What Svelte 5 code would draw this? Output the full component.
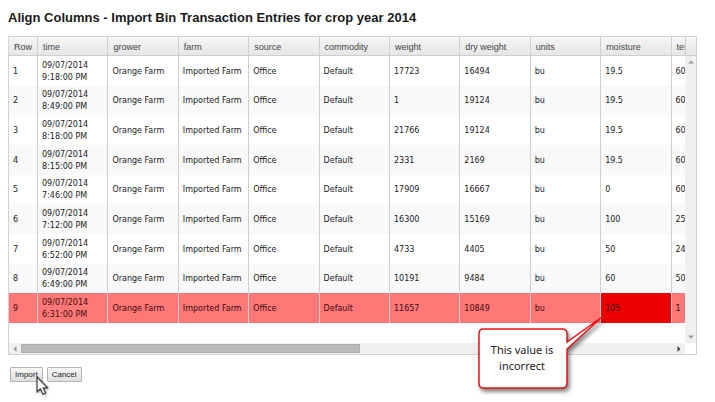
<script>
	const columns = [
		'Row',
		'time',
		'grower',
		'farm',
		'source',
		'commodity',
		'weight',
		'dry weight',
		'units',
		'moisture',
		'test weight'
	];

	const entries = [
		{ time: '9:18:00 PM', weight: 17723, dryWeight: 16494, moisture: 19.5, test: 60 },
		{ time: '8:49:00 PM', weight: 1, dryWeight: 19124, moisture: 19.5, test: 60 },
		{ time: '8:18:00 PM', weight: 21766, dryWeight: 19124, moisture: 19.5, test: 60 },
		{ time: '8:15:00 PM', weight: 2331, dryWeight: 2169, moisture: 19.5, test: 60 },
		{ time: '7:46:00 PM', weight: 17909, dryWeight: 16667, moisture: 0, test: 60 },
		{ time: '7:12:00 PM', weight: 16300, dryWeight: 15169, moisture: 100, test: 25 },
		{ time: '6:52:00 PM', weight: 4733, dryWeight: 4405, moisture: 50, test: 24 },
		{ time: '6:49:00 PM', weight: 10191, dryWeight: 9484, moisture: 60, test: 50 },
		{ time: '6:31:00 PM', weight: 11657, dryWeight: 10849, moisture: 105, test: 1 }
	];

	const isInvalid = (entry) => entry.moisture > 100;
</script>

<main>
	<h1>Align Columns - Import Bin Transaction Entries for crop year 2014</h1>

	<div class="grid">
		<div class="grid-view">
			<div class="viewport">
				<table>
					<thead>
						<tr>
							{#each columns as column}
								<th class:row-number={column === 'Row'}>{column}</th>
							{/each}
						</tr>
					</thead>
					<tbody>
						{#each entries as entry, i}
							<tr class:invalid={isInvalid(entry)}>
								<td>{i + 1}</td>
								<td>09/07/2014<br />{entry.time}</td>
								<td>Orange Farm</td>
								<td>Imported Farm</td>
								<td>Office</td>
								<td>Default</td>
								<td>{entry.weight}</td>
								<td>{entry.dryWeight}</td>
								<td>bu</td>
								<td class:bad-value={isInvalid(entry)}>{entry.moisture}</td>
								<td>{entry.test}</td>
							</tr>
						{/each}
					</tbody>
				</table>
			</div>
			<div class="side">
				<div class="corner"></div>
				<div class="scroll-v">
					<svg width="6" height="4" viewBox="0 0 6 4"><path d="M0 3.5 3 .5 6 3.5z" fill="#999" /></svg>
					<svg width="6" height="4" viewBox="0 0 6 4"><path d="M0 .5h6L3 3.5z" fill="#999" /></svg>
				</div>
			</div>
		</div>
		<div class="scroll-h">
			<svg width="4" height="6" viewBox="0 0 4 6"><path d="M3.5 0v6L.5 3z" fill="#999" /></svg>
			<div class="track"><div class="thumb"></div></div>
			<svg width="4" height="6" viewBox="0 0 4 6"><path d="M.5 0v6l3-3z" fill="#444" /></svg>
		</div>

		<!-- Validation callout -->
		<div class="callout">
			<svg width="134" height="84" viewBox="0 0 134 84">
				<path
					d="M5 17H84Q89 17 89 22V30L124 5 89 37V71Q89 76 84 76H5Q1 76 1 71V22Q1 17 5 17Z"
					fill="#fff"
					stroke="#e81414"
					stroke-width="1.5"
				/>
			</svg>
			<p>This value is<br />incorrect</p>
		</div>
	</div>

	<div class="actions">
		<button type="button">Import</button>
		<button type="button">Cancel</button>
		<svg class="cursor" width="14" height="20" viewBox="0 0 14 20">
			<path
				d="M1 1V16L4.4 12.8 7 18.2 9.6 17 7.1 11.8H11.6Z"
				fill="#fff"
				stroke="#444"
				stroke-width="1.3"
				stroke-linejoin="round"
			/>
		</svg>
	</div>
</main>

<style>
	:global(body) {
		background: #fff;
	}

	main {
		padding: 10px 18px 20px 8px;
		font-family: 'Liberation Sans', Arial, sans-serif;
		color: #222;
	}

	h1 {
		margin: 0 0 10px;
		font-size: 13px;
		line-height: 16px;
		color: #1a1a1a;
		white-space: nowrap;
	}

	.grid {
		position: relative;
		border: 1px solid #d2d2d2;
	}

	.grid-view {
		display: flex;
		height: 306px;
	}

	.viewport {
		flex: 1;
		min-width: 0;
		overflow: hidden;
	}

	table {
		width: 733px;
		height: 286px;
		table-layout: fixed;
		border-collapse: separate;
		border-spacing: 0;
	}

	th,
	td {
		box-sizing: border-box;
		border-right: 1px solid #cfcfcf;
		text-align: left;
		vertical-align: middle;
		white-space: nowrap;
	}

	th {
		height: 19px;
		padding: 1px 0 0 5px;
		border-bottom: 1px solid #cfcfcf;
		background: linear-gradient(#f6f6f6, #e6e6e6);
		font-size: 9px;
		font-weight: normal;
		line-height: 12px;
		color: #444;
	}

	th.row-number {
		width: 29px;
	}

	td {
		padding: 2px 0 0 4px;
		font-family: 'DejaVu Sans', Verdana, sans-serif;
		font-size: 8px;
		line-height: 12px;
		color: #222;
	}

	tbody tr:nth-child(even) td {
		background: #f9f9f9;
	}

	tbody tr.invalid td {
		background: #ff7777;
		color: #400c0c;
	}

	tbody tr.invalid td.bad-value {
		background: #ee0000;
	}

	.side {
		display: flex;
		flex-direction: column;
		width: 11px;
	}

	.corner {
		box-sizing: border-box;
		height: 19px;
		border-left: 1px solid #cfcfcf;
		border-bottom: 1px solid #cfcfcf;
		background: linear-gradient(#f6f6f6, #e6e6e6);
	}

	.scroll-v {
		flex: 1;
		display: flex;
		flex-direction: column;
		align-items: center;
		justify-content: space-between;
		padding: 4px 0;
		background: #f0f0f0;
	}

	.scroll-h {
		display: flex;
		align-items: center;
		gap: 4px;
		height: 11px;
		margin-right: 11px;
		padding: 0 4px;
		background: #f0f0f0;
	}

	.track {
		flex: 1;
	}

	.thumb {
		box-sizing: border-box;
		width: 52%;
		height: 9px;
		border: 1px solid #acacac;
		background: #bababa;
	}

	.callout {
		position: absolute;
		top: 275px;
		left: 469px;
	}

	.callout svg {
		display: block;
		filter: drop-shadow(2px 3px 2px rgba(0, 0, 0, 0.5));
	}

	.callout p {
		position: absolute;
		top: 30px;
		left: 0;
		width: 88px;
		margin: 0;
		font-family: 'Noto Sans', 'Open Sans', sans-serif;
		font-size: 11px;
		line-height: 16px;
		text-align: center;
		color: #222;
	}

	.actions {
		position: relative;
		display: flex;
		gap: 4px;
		margin-top: 12px;
		padding-left: 2px;
	}

	button {
		box-sizing: border-box;
		height: 15px;
		padding: 0 4px;
		border: 1px solid #b4b4b4;
		border-radius: 1px;
		background: linear-gradient(#f8f8f8, #dedede);
		font-family: inherit;
		font-size: 8px;
		line-height: 12px;
		color: #222;
	}

	.cursor {
		position: absolute;
		top: 9px;
		left: 28px;
		filter: drop-shadow(1px 1px 1px rgba(0, 0, 0, 0.3));
	}
</style>
